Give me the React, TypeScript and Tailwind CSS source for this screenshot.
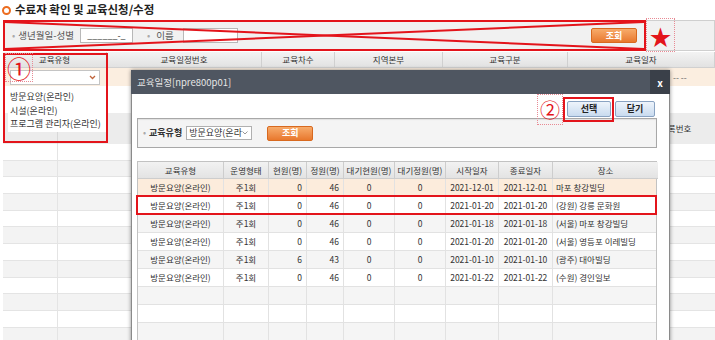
import React from 'react';

const gridRows: string[][] = [
  ['방문요양(온라인)', '주1회', '0', '46', '0', '0', '2021-12-01', '2021-12-01', '마포 창강빌딩'],
  ['방문요양(온라인)', '주1회', '0', '46', '0', '0', '2021-01-20', '2021-01-20', '(강원) 강릉 문화원'],
  ['방문요양(온라인)', '주1회', '0', '46', '0', '0', '2021-01-18', '2021-01-18', '(서울) 마포 창강빌딩'],
  ['방문요양(온라인)', '주1회', '0', '46', '0', '0', '2021-01-20', '2021-01-20', '(서울) 영등포 이레빌딩'],
  ['방문요양(온라인)', '주1회', '6', '43', '0', '0', '2021-01-10', '2021-01-10', '(광주) 대아빌딩'],
  ['방문요양(온라인)', '주1회', '0', '46', '0', '0', '2021-01-22', '2021-01-22', '(수원) 경인일보'],
];

const modalHeaders = ['교육유형', '운영형태', '현원(명)', '정원(명)', '대기현원(명)', '대기정원(명)', '시작일자', '종료일자', '장소'];
const cellAlign = [
  'justify-center',
  'justify-center',
  'justify-end pr-[4px]',
  'justify-end pr-[4px]',
  'justify-center',
  'justify-center',
  'justify-center',
  'justify-center',
  'justify-start pl-[3px]',
];

const pageHeaders = ['교육유형', '교육일정번호', '교육차수', '지역본부', '교육구분', '교육일자'];

const OrangeButton = ({ className }: { className: string }) => (
  <button
    className={`flex h-[15px] w-[46px] items-center justify-center rounded-[2px] border border-[#d8691f] bg-gradient-to-b from-[#f7ab6a] to-[#e8782c] text-[9px] font-bold text-white ${className}`}
  >
    조회
  </button>
);

const BlueButton = ({ label, width }: { label: string; width: string }) => (
  <button
    className={`flex h-[16px] ${width} items-center justify-center rounded-[2px] border border-[#8aa3c2] bg-gradient-to-b from-[#eef4fb] to-[#c9dbef] text-[9px] font-bold text-[#222]`}
  >
    {label}
  </button>
);

export default function App() {
  return (
    <div className="relative h-[340px] w-[715px] overflow-hidden bg-white font-['Noto_Sans_CJK_KR',sans-serif] text-[#333]">
      {/* page title */}
      <div className="flex h-[20px] items-center gap-[4px] pl-[2px]">
        <span className="h-[9px] w-[9px] rounded-full border-2 border-[#ec6c1f]" />
        <h1 className="text-[11.5px] font-bold leading-none text-[#222]">수료자 확인 및 교육신청/수정</h1>
      </div>

      {/* search bar */}
      <div className="ml-[3px] flex h-[31px] items-center border border-[#cfcfcf] bg-[#f1f1f1] pl-[8px] text-[9.5px] leading-none text-[#555]">
        <span className="text-[#aaa]">•</span>
        <span className="ml-[3px]">생년월일-성별</span>
        <div className="ml-[6px] flex h-[15px] w-[53px] items-center justify-center border border-[#b8b8b8] bg-white text-[9px] text-[#333]">
          ______-_
        </div>
        <span className="ml-[14px] text-[#aaa]">•</span>
        <span className="ml-[6px]">이름</span>
        <div className="ml-[9px] h-[15px] w-[55px] border border-[#b8b8b8] bg-white" />
        <OrangeButton className="ml-auto mr-[77px]" />
      </div>

      {/* main grid */}
      <div className="ml-[3px] mt-[1px] grid grid-cols-[104px_155px_73px_108px_125px_1fr] text-[8.5px]">
        {pageHeaders.map((h) => (
          <div
            key={h}
            className="flex h-[16px] items-center justify-center border-r border-b border-[#d0d0d0] bg-gradient-to-b from-[#f3f3f3] to-[#e2e2e2] text-[#333]"
          >
            {h}
          </div>
        ))}
        <div className="flex h-[18px] items-center bg-[#fbeee0] px-[7px]">
          <div className="flex h-[15px] w-full items-center justify-end border border-[#c4c4c4] bg-white pr-[3px]">
            <svg width="7" height="5" viewBox="0 0 7 5">
              <path d="M1 1l2.5 2.5L6 1" fill="none" stroke="#c0653c" strokeWidth="1.3" />
            </svg>
          </div>
        </div>
        <div className="col-span-4 h-[18px] bg-[#fbeee0]" />
        <div className="flex h-[18px] items-center bg-[#fbeee0] pl-[105px] text-[#666]">-- --</div>
      </div>

      {/* second grid */}
      <div className="ml-[3px] mt-[27px] grid grid-cols-[55px_582px_1fr] text-[8.5px]">
        <div className="h-[31px] border-r border-[#d8d8d8] bg-[#ececec]" />
        <div className="h-[31px] bg-[#ececec]" />
        <div className="flex h-[31px] items-center bg-[#ececec] pl-[20px] text-[#333]">등록번호</div>
        {Array.from({ length: 12 }, (_, i) => (
          <React.Fragment key={i}>
            <div className={`h-[16.7px] border-r border-b border-[#e4e4e4] ${i % 2 ? 'bg-[#f3f3f3]' : 'bg-white'}`} />
            <div className={`col-span-2 h-[16.7px] border-b border-[#e4e4e4] ${i % 2 ? 'bg-[#f3f3f3]' : 'bg-white'}`} />
          </React.Fragment>
        ))}
      </div>

      {/* open dropdown list */}
      <div className="absolute left-[8px] top-[87px] flex h-[45px] w-[98px] flex-col bg-white pt-[3px] text-[9px] text-[#333]">
        <div className="flex h-[13.5px] items-center pl-[2px]">방문요양(온라인)</div>
        <div className="flex h-[13.5px] items-center pl-[2px]">시설(온라인)</div>
        <div className="flex h-[13.5px] items-center pl-[2px]">프로그램 관리자(온라인)</div>
      </div>

      {/* modal */}
      <div className="absolute left-[131px] top-[70px] flex h-[280px] w-[539px] flex-col shadow-[0_0_4px_rgba(0,0,0,0.45)]">
        <div className="flex h-[24px] items-center justify-between bg-[#4f5661] pl-[6px]">
          <span className="text-[9.5px] text-[#e6e6e6]">교육일정[npre800p01]</span>
          <span className="flex h-[24px] w-[20px] items-center justify-center bg-[#3a4049] text-[10px] font-bold text-white">
            x
          </span>
        </div>
        <div className="flex flex-1 flex-col border-x border-[#8a8a8a] bg-white pt-[7px]">
          <div className="flex justify-end gap-[4px] pr-[14px]">
            <BlueButton label="선택" width="w-[44px]" />
            <BlueButton label="닫기" width="w-[40px]" />
          </div>
          <div className="ml-[5px] mt-[1px] flex h-[30px] w-[520px] items-center border border-[#a8a8a8] bg-[#f4f4f4] pl-[5px] text-[9px] shadow-[inset_0_1px_1px_rgba(0,0,0,0.08)]">
            <span className="text-[#aaa]">•</span>
            <span className="ml-[3px] font-bold text-[#333]">교육유형</span>
            <div className="ml-[4px] flex h-[14px] w-[66px] items-center justify-between border border-[#b0b0b0] bg-white pl-[2px] pr-[3px] text-[#333]">
              <span>방문요양(온라</span>
              <svg width="6" height="4" viewBox="0 0 6 4">
                <path d="M0.5 0.5l2.5 2.5 2.5-2.5" fill="none" stroke="#999" strokeWidth="1" />
              </svg>
            </div>
            <OrangeButton className="ml-[15px]" />
          </div>

          <div className="ml-[5px] mt-[13px] w-[520px] border-x border-t border-[#c2c2c2] text-[8.5px]">
            <div className="grid grid-cols-[86px_45px_38px_37px_51px_51px_53px_54px_105px]">
              {modalHeaders.map((h) => (
                <div
                  key={h}
                  className="flex h-[17px] items-center justify-center border-r border-b border-[#cdcdcd] bg-gradient-to-b from-[#f2f2f2] to-[#e3e3e3] text-[#333] last:border-r-0"
                >
                  {h}
                </div>
              ))}
            </div>
            {[...gridRows, ...Array.from({ length: 3 }, () => Array(9).fill(''))].map((row, r) => (
              <div
                key={r}
                className={`grid h-[18px] grid-cols-[86px_45px_38px_37px_51px_51px_53px_54px_105px] border-b border-[#e2e2e2] ${
                  r === 0 ? 'bg-[#fcecdc]' : r % 2 ? 'bg-white' : 'bg-[#f5f5f5]'
                }`}
              >
                {row.map((c: string, i: number) => (
                  <div key={i} className={`flex items-center border-r border-[#e2e2e2] text-[#333] last:border-r-0 ${cellAlign[i]}`}>
                    {c}
                  </div>
                ))}
              </div>
            ))}
          </div>
        </div>
      </div>

      {/* red annotations */}
      <div className="absolute left-[3px] top-[20px] h-[31px] w-[643px] border-2 border-[#e3141b]">
        <svg className="absolute inset-0 h-full w-full" viewBox="0 0 639 27" preserveAspectRatio="none">
          <line x1="0" y1="0" x2="639" y2="27" stroke="#e3141b" strokeWidth="2" vectorEffect="non-scaling-stroke" />
          <line x1="0" y1="27" x2="639" y2="0" stroke="#e3141b" strokeWidth="2" vectorEffect="non-scaling-stroke" />
        </svg>
      </div>
      <div className="absolute left-[646px] top-[18px] flex h-[34px] w-[29px] items-center justify-center border border-dotted border-[#e88a94] text-[22px] leading-none text-[#e3141b]">
        ★
      </div>

      <div className="absolute left-[3px] top-[53px] h-[90px] w-[105px] border-2 border-[#e3141b]" />
      <div className="absolute left-[5px] top-[53px] flex h-[29px] w-[28px] items-center justify-center border border-dotted border-[#e88a94] text-[24px] leading-none text-[#e3141b]">
        ①
      </div>

      <div className="absolute left-[537px] top-[94px] flex h-[31px] w-[26px] items-center justify-center border border-dotted border-[#e88a94] text-[20px] leading-none text-[#e3141b]">
        ②
      </div>
      <div className="absolute left-[563px] top-[97px] h-[25px] w-[51px] border-2 border-[#e3141b]" />

      <div className="absolute left-[136px] top-[195px] h-[20px] w-[521px] border-2 border-[#e3141b]" />
    </div>
  );
}
